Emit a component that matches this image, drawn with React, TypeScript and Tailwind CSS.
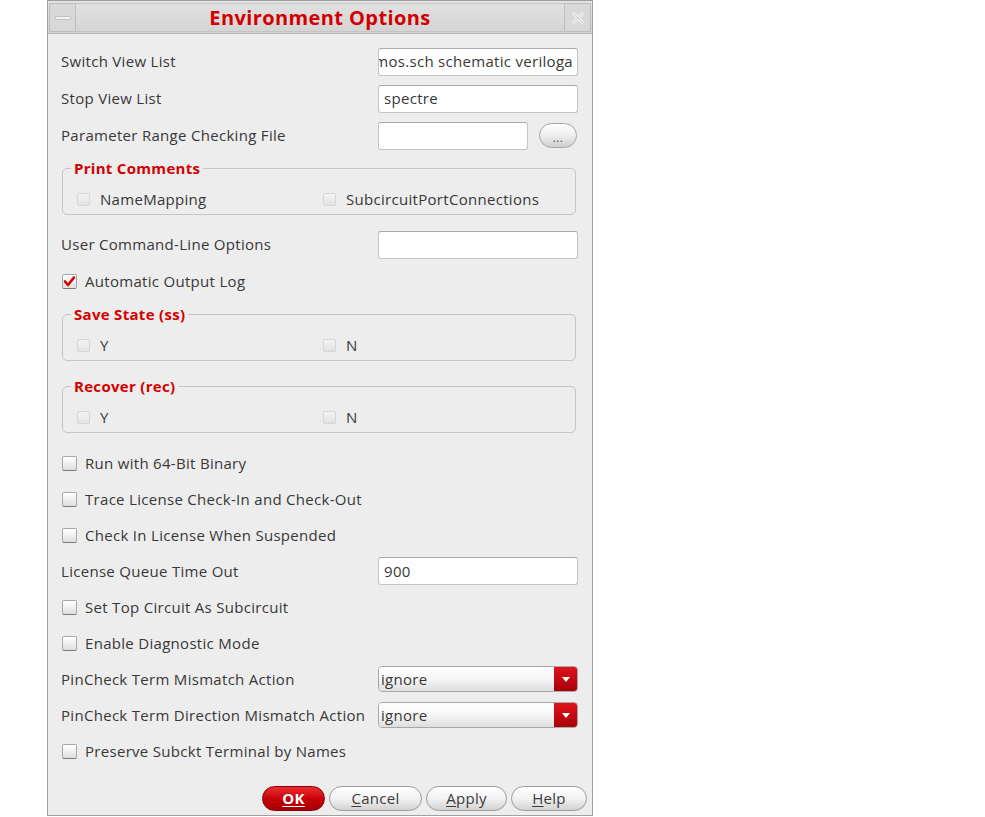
import React from 'react';

const font = { fontFamily: '"Open Sans", "DejaVu Sans", sans-serif' };

function Box({ checked, faint }: { checked?: boolean; faint?: boolean }) {
  if (faint) {
    return <div className="w-[13px] h-[13px] rounded-[2px] border border-[#d6d6d6] bg-gradient-to-b from-[#f4f4f4] to-[#e2e2e2] shrink-0" />;
  }
  return (
    <div className="w-[15px] h-[15px] rounded-[2px] border border-[#a8a8a8] border-b-[#7a7a7a] bg-gradient-to-b from-white to-[#dedede] shrink-0 flex items-center justify-center">
      {checked && (
        <svg width="13" height="13" viewBox="0 0 13 13">
          <path d="M2 6.5 L5 10 L11 2.5" fill="none" stroke="#d40000" strokeWidth="2.6" strokeLinecap="round" strokeLinejoin="round" />
        </svg>
      )}
    </div>
  );
}

function TextField({ value, width = 'w-[200px]', clipLeft }: { value?: string; width?: string; clipLeft?: boolean }) {
  return (
    <div className={`${width} h-[28px] rounded-[3px] border border-[#c4c4c4] border-t-[#a9a9a9] bg-white flex items-center overflow-hidden whitespace-nowrap ${clipLeft ? 'justify-end pr-[4px]' : 'pl-[5px]'}`}>
      <span>{value}</span>
    </div>
  );
}

function Select({ value }: { value: string }) {
  return (
    <div className="w-[200px] h-[26px] flex rounded-[4px] border border-[#a8a8a8] overflow-hidden">
      <div className="flex-1 flex items-center pl-[2px] bg-gradient-to-b from-white via-[#f6f6f6] to-[#dedede]">{value}</div>
      <div className="w-[23px] bg-gradient-to-b from-[#e0141c] to-[#a80008] flex items-center justify-center">
        <svg width="8" height="5" viewBox="0 0 8 5"><path d="M0 0 H8 L4 5 Z" fill="#fff" /></svg>
      </div>
    </div>
  );
}

function Group({ title, children, className = '' }: { title: string; children: React.ReactNode; className?: string }) {
  return (
    <div className={`relative ml-[14px] mr-[16px] h-[47px] rounded-[5px] border border-[#c6c6c6] ${className}`}>
      <span className="absolute -top-[11px] left-[8px] px-[3px] bg-[#ededed] text-[#d40000] font-bold leading-[20px]">{title}</span>
      <div className="flex items-center h-full pt-[16px] pl-[14px]">{children}</div>
    </div>
  );
}

function GroupItem({ label, wide }: { label: string; wide?: boolean }) {
  return (
    <div className={`flex items-center gap-[10px] ${wide ? 'w-[246px]' : ''}`}>
      <Box faint />
      <span>{label}</span>
    </div>
  );
}

function CheckRow({ label, checked, h = 'h-[36px]', className = '' }: { label: string; checked?: boolean; h?: string; className?: string }) {
  return (
    <div className={`flex items-center gap-[8px] px-[14px] ${h} ${className}`}>
      <Box checked={checked} />
      <span>{label}</span>
    </div>
  );
}

function Btn({ label, u, w, primary }: { label: string; u: string; w: string; primary?: boolean }) {
  const rest = label.slice(1);
  return (
    <button
      className={`${w} h-[25px] rounded-full border flex items-center justify-center text-[15px] ${
        primary
          ? 'border-[#8a0006] bg-gradient-to-b from-[#ee2a30] via-[#c8000a] to-[#a40006] text-white font-bold'
          : 'border-[#9c9c9c] bg-gradient-to-b from-white via-[#f2f2f2] to-[#d2d2d2] text-[#3a3a3a]'
      }`}
    >
      <span className="underline underline-offset-2">{u}</span>
      <span className={primary ? 'underline underline-offset-2' : ''}>{rest}</span>
    </button>
  );
}

export default function App() {
  return (
    <div className="min-h-screen bg-white" style={font}>
      <div className="ml-[47px] w-[546px] h-[816px] border border-[#a0a0a0] bg-[#ededed] text-[15px] tracking-[0.3px] text-[#383838] flex flex-col">
        {/* Title bar */}
        <div className="h-[33px] flex items-stretch border-b border-[#b8b8b8] bg-gradient-to-b from-[#e2e2e2] to-[#d4d4d4] pt-[2px] pb-[1px] px-[1px]">
          <div className="w-[27px] border border-[#bdbdbd] bg-[#d8d8d8] flex items-center justify-center">
            <div className="w-[16px] h-[4px] rounded-[1px] bg-[#f2f2f2] border border-[#c2c2c2]" />
          </div>
          <div className="flex-1 border-y border-[#c4c4c4] flex items-center justify-center text-[20px] tracking-[0.4px] font-bold text-[#d10000]">
            Environment Options
          </div>
          <div className="w-[27px] border border-[#bdbdbd] bg-[#d8d8d8] flex items-center justify-center">
            <svg width="14" height="14" viewBox="0 0 14 14">
              <path d="M2 2 L12 12 M12 2 L2 12" stroke="#f4f4f4" strokeWidth="3" />
              <path d="M2 2 L12 12 M12 2 L2 12" stroke="#c8c8c8" strokeWidth="1" />
            </svg>
          </div>
        </div>

        <div className="flex items-center justify-between pl-[13px] pr-[14px] h-[37px] mt-[9px]">
          <span>Switch View List</span>
          <TextField value="cmos.sch schematic veriloga" clipLeft />
        </div>
        <div className="flex items-center justify-between pl-[13px] pr-[14px] h-[37px]">
          <span>Stop View List</span>
          <TextField value="spectre" />
        </div>
        <div className="flex items-center pl-[13px] pr-[15px] h-[37px]">
          <span className="flex-1">Parameter Range Checking File</span>
          <TextField width="w-[150px]" />
          <button className="ml-[11px] w-[38px] h-[25px] rounded-full border border-[#a6a6a6] bg-gradient-to-b from-white via-[#eeeeee] to-[#cfcfcf] text-[12px] leading-none text-[#555] pt-[4px]">
            ...
          </button>
        </div>

        <Group title="Print Comments" className="mt-[14px]">
          <GroupItem label="NameMapping" wide />
          <GroupItem label="SubcircuitPortConnections" />
        </Group>

        <div className="flex items-center justify-between pl-[13px] pr-[14px] h-[37px] mt-[11px]">
          <span>User Command-Line Options</span>
          <TextField />
        </div>
        <CheckRow label="Automatic Output Log" checked h="h-[37px]" />

        <Group title="Save State (ss)" className="mt-[14px]">
          <GroupItem label="Y" wide />
          <GroupItem label="N" />
        </Group>
        <Group title="Recover (rec)" className="mt-[25px]">
          <GroupItem label="Y" wide />
          <GroupItem label="N" />
        </Group>

        <CheckRow label="Run with 64-Bit Binary" className="mt-[12px]" />
        <CheckRow label="Trace License Check-In and Check-Out" />
        <CheckRow label="Check In License When Suspended" />
        <div className="flex items-center justify-between pl-[13px] pr-[14px] h-[36px]">
          <span>License Queue Time Out</span>
          <TextField value="900" />
        </div>
        <CheckRow label="Set Top Circuit As Subcircuit" />
        <CheckRow label="Enable Diagnostic Mode" />
        <div className="flex items-center justify-between pl-[13px] pr-[14px] h-[36px]">
          <span>PinCheck Term Mismatch Action</span>
          <Select value="ignore" />
        </div>
        <div className="flex items-center justify-between pl-[13px] pr-[14px] h-[36px]">
          <span>PinCheck Term Direction Mismatch Action</span>
          <Select value="ignore" />
        </div>
        <CheckRow label="Preserve Subckt Terminal by Names" />

        <div className="flex justify-end gap-[4px] pr-[5px] mt-[17px]">
          <Btn label="OK" u="O" w="w-[63px]" primary />
          <Btn label="Cancel" u="C" w="w-[93px]" />
          <Btn label="Apply" u="A" w="w-[81px]" />
          <Btn label="Help" u="H" w="w-[76px]" />
        </div>
      </div>
    </div>
  );
}
